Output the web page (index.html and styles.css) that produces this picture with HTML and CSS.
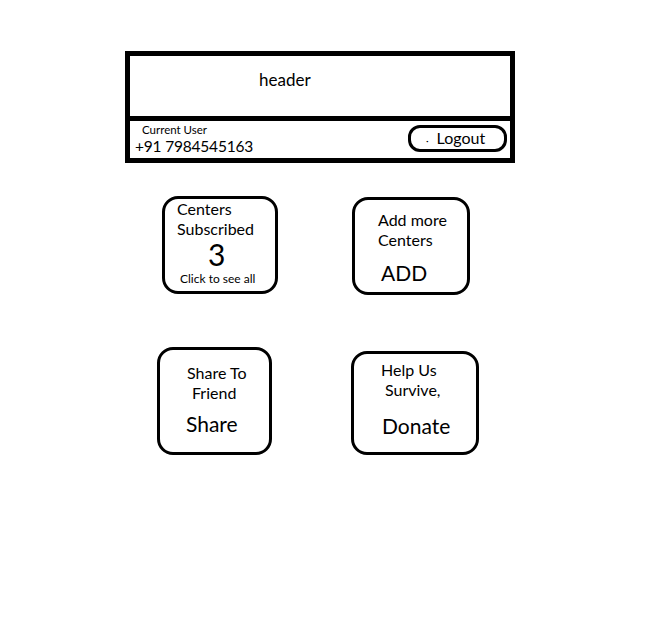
FILE: index.html
```html
<!DOCTYPE html>
<html>
<head>
<meta charset="utf-8">
<link rel="stylesheet" href="styles.css">
</head>
<body>
<div class="page">
  <div class="frame">
    <div class="header"><span class="header-title">header</span></div>
    <div class="userbar">
      <div class="user">
        <div class="user-label">Current User</div>
        <div class="user-phone">+91 7984545163</div>
      </div>
      <div class="logout"><span class="dot">·</span>Logout</div>
    </div>
  </div>
  <div class="row row-1">
    <div class="card card-a">
      <div class="t t1">Centers</div>
      <div class="t t2">Subscribed</div>
      <div class="big-num">3</div>
      <div class="small">Click to see all</div>
    </div>
    <div class="card card-b">
      <div class="t t1">Add more</div>
      <div class="t t2">Centers</div>
      <div class="action">ADD</div>
    </div>
  </div>
  <div class="row row-2">
    <div class="card card-c">
      <div class="t t1">Share To</div>
      <div class="t t2">Friend</div>
      <div class="action">Share</div>
    </div>
    <div class="card card-d">
      <div class="t t1">Help Us</div>
      <div class="t t2">Survive,</div>
      <div class="action">Donate</div>
    </div>
  </div>
</div>
</body>
</html>
```
FILE: styles.css
```css
html, body {
  margin: 0;
  padding: 0;
  background: #fff;
}
body {
  font-family: Lato, "Open Sans", sans-serif;
  color: #000;
  width: 672px;
  height: 622px;
  overflow: hidden;
}
.page {
  padding-top: 51px;
}
.frame {
  margin-left: 125px;
  width: 390px;
  box-sizing: border-box;
  border: 5px solid #000;
}
.header {
  height: 60px;
  border-bottom: 5px solid #000;
  box-sizing: content-box;
}
.header-title {
  display: block;
  padding-left: 129px;
  padding-top: 14px;
  font-size: 17px;
  line-height: 20px;
}
.userbar {
  height: 37px;
  display: flex;
  justify-content: space-between;
  align-items: flex-start;
}
.user {
  padding-left: 5px;
}
.user-label {
  font-size: 11.5px;
  line-height: 15px;
  padding-left: 7px;
  padding-top: 1px;
}
.user-phone {
  font-size: 15.5px;
  line-height: 18px;
  letter-spacing: -0.2px;
}
.logout {
  margin-top: 4px;
  margin-right: 3px;
  width: 99px;
  height: 27px;
  box-sizing: border-box;
  border: 3px solid #000;
  border-radius: 12px;
  font-size: 16px;
  line-height: 20px;
  padding-left: 15px;
}
.dot {
  font-size: 10px;
  margin-right: 8px;
}
.row {
  display: flex;
  align-items: flex-start;
}
.card {
  box-sizing: border-box;
  border: 3px solid #000;
  border-radius: 16px;
  font-size: 16px;
}
.t {
  line-height: 20px;
}
.row-1 {
  margin-top: 33px;
}
.card-a {
  margin-left: 162px;
  width: 116px;
  height: 98px;
  padding: 0 0 0 12px;
}
.big-num {
  font-size: 30px;
  line-height: 31px;
  padding-left: 31px;
}
.small {
  font-size: 12px;
  line-height: 14px;
  padding-left: 3px;
  margin-top: 2px;
}
.card-b {
  margin-left: 74px;
  margin-top: 1px;
  width: 118px;
  height: 98px;
  padding: 10px 0 0 23px;
}
.action {
  font-size: 21px;
  line-height: 26px;
  margin-top: 10px;
}
.card-b .action {
  padding-left: 3px;
}
.row-2 {
  margin-top: 52px;
}
.card-c {
  margin-left: 157px;
  width: 115px;
  height: 108px;
  padding: 13px 0 0 27px;
}
.card-c .t2 {
  padding-left: 5px;
}
.card-c .action {
  margin-top: 8px;
  margin-left: -1px;
}
.card-d {
  margin-left: 79px;
  margin-top: 4px;
  width: 128px;
  height: 104px;
  padding: 6px 0 0 27px;
}
.card-d .t2 {
  padding-left: 4px;
}
.card-d .action {
  margin-top: 13px;
  margin-left: 1px;
}
```
